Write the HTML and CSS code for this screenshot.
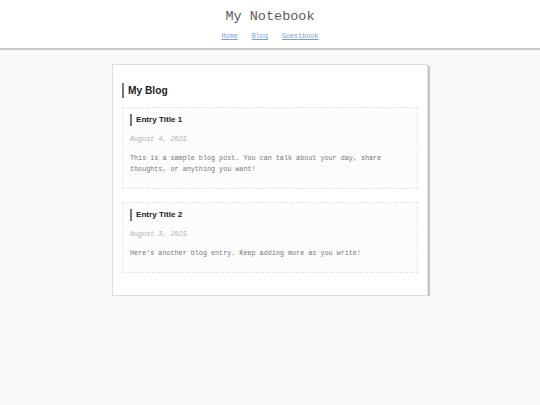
FILE: index.html
```html
<!DOCTYPE html>
<html>
<head>
<meta charset="utf-8">
<link rel="stylesheet" href="styles.css">
</head>
<body>
<header class="site-header">
  <h1 class="site-title">My Notebook</h1>
  <nav class="site-nav">
    <a href="#">Home</a>
    <a href="#">Blog</a>
    <a href="#">Guestbook</a>
  </nav>
</header>
<main class="card">
  <h2 class="card-title">My Blog</h2>
  <article class="entry">
    <h3 class="entry-title">Entry Title 1</h3>
    <p class="entry-date">August 4, 2025</p>
    <p class="entry-body">This is a sample blog post. You can talk about your day, share thoughts, or anything you want!</p>
  </article>
  <article class="entry">
    <h3 class="entry-title">Entry Title 2</h3>
    <p class="entry-date">August 3, 2025</p>
    <p class="entry-body">Here's another blog entry. Keep adding more as you write!</p>
  </article>
</main>
</body>
</html>
```

FILE: styles.css
```css
html, body {
  margin: 0;
  padding: 0;
}
body {
  background: #f8f8f8;
  font-family: "Liberation Mono", "Courier New", monospace;
  color: #666;
}
.site-header {
  background: #fff;
  border-bottom: 2px solid #c8c8c8;
  text-align: center;
  padding: 9px 0 8px;
}
.site-title {
  margin: 0;
  font-weight: normal;
  font-size: 13.5px;
  line-height: 16px;
  color: #5a5a5a;
}
.site-nav {
  margin-top: 7px;
  font-size: 6.75px;
  line-height: 8px;
  display: flex;
  justify-content: center;
  gap: 14px;
}
.site-nav a {
  color: #7a9be0;
}
.card {
  width: 296px;
  margin: 14px auto 0;
  background: #fff;
  border: 1px solid #ddd;
  box-shadow: 2px 2px 0 #c8c8c8;
  padding: 18px 9px 22px;
}
.card-title {
  margin: 0 0 9px;
  font-family: "Liberation Sans", Arial, sans-serif;
  font-weight: bold;
  font-size: 10.2px;
  line-height: 15px;
  color: #222;
  border-left: 2px solid #777;
  padding-left: 4px;
}
.entry {
  background: #fcfcfc;
  border: 1px dashed #e6e6e6;
  padding: 6px 7px 13px;
  margin-bottom: 13px;
}
.entry:last-child {
  margin-bottom: 0;
}
.entry-title {
  margin: 0;
  font-family: "Liberation Sans", Arial, sans-serif;
  font-weight: bold;
  font-size: 8.1px;
  line-height: 12px;
  color: #222;
  border-left: 2px solid #777;
  padding-left: 4px;
}
.entry-date {
  margin: 9px 0 0;
  font-style: italic;
  font-size: 6.75px;
  line-height: 9px;
  color: #b0b0b0;
}
.entry-body {
  margin: 9px 0 0;
  font-size: 6.75px;
  line-height: 11px;
  color: #777;
}
```
